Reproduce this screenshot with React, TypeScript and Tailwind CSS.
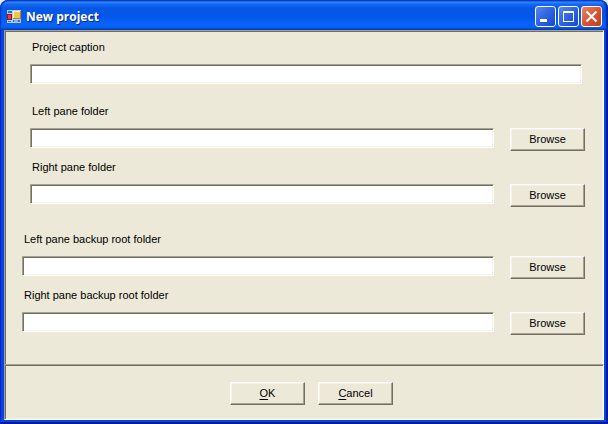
import React, { useState } from 'react';

const sunken =
  'border border-t-[#a5a292] border-l-[#a5a292] border-r-white border-b-white shadow-[inset_1px_1px_0_#716f64,inset_-1px_-1px_0_#f4f2e8]';
const raised =
  'border border-t-white border-l-white border-r-[#716f64] border-b-[#716f64] shadow-[inset_-1px_-1px_0_#a5a292,inset_1px_1px_0_#f4f2e8]';

export default function App() {
  return (
    <div className="min-h-screen flex flex-col bg-[#e4e8f0] font-['Liberation_Sans',Arial,sans-serif] text-[11px] leading-4 text-black">
      <div className="flex-1 flex flex-col rounded-t-lg bg-[#0a3fe0] overflow-hidden">
        <TitleBar title="New project" />
        <div className="flex-1 flex flex-col px-1 pb-1 bg-[#0844e2] shadow-[inset_1px_0_0_#0020c8,inset_-2px_0_0_#001c9c,inset_0_-2px_0_#001c9c]">
          <main className="flex-1 bg-[#ece9d8] pt-2 px-px border-t border-x border-t-[#a5a292] border-l-[#a5a292] border-r-white shadow-[inset_1px_1px_0_#716f64,inset_-1px_0_0_#f4f2e8]">
            <div className="pl-6 pr-[17px]">
              <div className="pr-[3px] mb-[19px]">
                <Field id="caption" label="Project caption" />
              </div>
              <div className="flex flex-col gap-2 mb-6">
                <Field id="left" label="Left pane folder" browse />
                <Field id="right" label="Right pane folder" browse />
              </div>
            </div>
            <div className="flex flex-col gap-2 pl-4 pr-[17px]">
              <Field id="left-backup" label="Left pane backup root folder" browse />
              <Field id="right-backup" label="Right pane backup root folder" browse />
            </div>
          </main>
          <footer
            className={`flex justify-center gap-[13px] bg-[#ece9d8] pt-[17px] pb-[14px] pl-[15px] ${sunken}`}
          >
            <PushButton>
              <u className="underline-offset-2">O</u>K
            </PushButton>
            <PushButton>
              <u className="underline-offset-2">C</u>ancel
            </PushButton>
          </footer>
        </div>
      </div>
    </div>
  );
}

const TitleBar = ({ title }: { title: string }) => (
  <header className="flex items-center h-[30px] px-1.5 pt-[3px] rounded-t-lg shadow-[inset_1px_1px_1px_#0838c0,inset_-2px_0_2px_#0228a0] bg-[linear-gradient(to_bottom,#0a46d0_0%,#2f86fb_7%,#1468f4_14%,#0458e6_28%,#0556ea_55%,#0864fa_80%,#0562f4_90%,#0342c4_100%)]">
    <AppIcon />
    <h1 className="flex-1 ml-1 font-['Open_Sans',sans-serif] text-[12px] font-bold text-white [text-shadow:1px_1px_0_#0a2a8c]">
      {title}
    </h1>
    <div className="flex gap-0.5">
      <CaptionButton label="Minimize">
        <path d="M5 13h7v3H5z" fill="#fff" />
      </CaptionButton>
      <CaptionButton label="Maximize">
        <path d="M5 5h11v11H5zM6 7v8h9V7z" fill="#fff" fillRule="evenodd" />
      </CaptionButton>
      <CaptionButton label="Close" danger>
        <path d="M5.5 5.5l10 10M15.5 5.5l-10 10" stroke="#fff" strokeWidth="2.2" />
      </CaptionButton>
    </div>
  </header>
);

interface CaptionButtonProps {
  label: string;
  danger?: boolean;
  children: React.ReactNode;
}

const CaptionButton = ({ label, danger, children }: CaptionButtonProps) => (
  <button
    type="button"
    aria-label={label}
    className={`w-[21px] h-[21px] rounded-[3px] overflow-hidden ${
      danger
        ? 'bg-linear-to-br from-[#e88a6c] via-[#dc5230] to-[#c03c14]'
        : 'bg-linear-to-br from-[#5c8cf0] via-[#2f62e0] to-[#1246cc]'
    }`}
  >
    <svg viewBox="0 0 21 21" className="block w-full h-full">
      <rect x="0.5" y="0.5" width="20" height="20" rx="2.5" fill="none" stroke="#fff" />
      {children}
    </svg>
  </button>
);

const AppIcon = () => (
  <svg viewBox="0 0 16 14" className="w-4 h-[14px]" aria-hidden="true">
    <rect x="1" width="14" height="13" fill="#b4cdf2" />
    <path d="M2 1h4v2H2zM2 11h3v1H2zM7 10h7v2H7z" fill="#2c6fdc" />
    <path d="M8 10h4v2H8z" fill="#7fb2f8" />
    <rect x="1.5" y="4.5" width="4" height="5" fill="#e0452c" stroke="#8c1a20" />
    <rect x="7" y="1" width="8" height="8" fill="#b88420" />
    <rect x="7" y="1" width="7" height="7" fill="#fff0c0" />
    <rect x="8" y="2" width="6" height="6" fill="#f8c440" />
  </svg>
);

interface FieldProps {
  id: string;
  label: string;
  browse?: boolean;
}

const Field = ({ id, label, browse }: FieldProps) => {
  const [value, setValue] = useState('');

  return (
    <div>
      <label htmlFor={id} className="block pl-0.5 mb-[9px]">
        {label}
      </label>
      <div className="flex items-start gap-4">
        <input
          id={id}
          type="text"
          value={value}
          onChange={(e) => setValue(e.target.value)}
          className={`flex-1 min-w-0 h-5 px-1 bg-white outline-none ${sunken}`}
        />
        {browse && <PushButton>Browse</PushButton>}
      </div>
    </div>
  );
};

const PushButton = ({ children }: { children: React.ReactNode }) => (
  <button type="button" className={`w-[75px] h-[23px] pb-0.5 bg-[#ece9d8] ${raised}`}>
    {children}
  </button>
);
